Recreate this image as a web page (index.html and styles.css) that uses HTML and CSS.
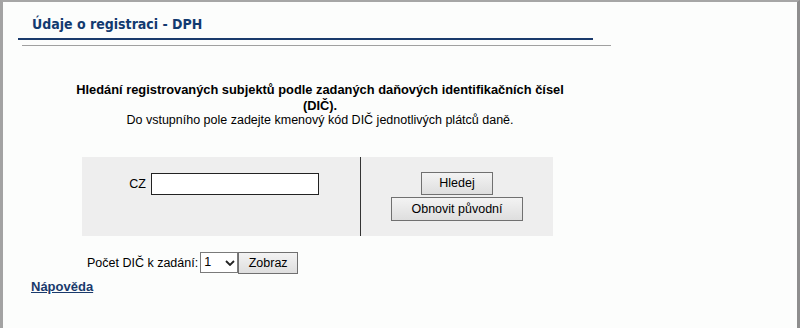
FILE: index.html
```html
<!DOCTYPE html>
<html lang="cs">
<head>
<meta charset="utf-8">
<title>Údaje o registraci - DPH</title>
<link rel="stylesheet" href="styles.css">
</head>
<body>
<div class="frame">
  <div class="header">
    <h1 class="title">Údaje o registraci - DPH</h1>
  </div>
  <div class="rule"></div>

  <div class="intro">
    <h2 class="lead">Hledání registrovaných subjektů podle zadaných daňových identifikačních čísel (DIČ).</h2>
    <p class="hint">Do vstupního pole zadejte kmenový kód DIČ jednotlivých plátců daně.</p>
  </div>

  <div class="panel">
    <div class="panel-left">
      <label class="cz" for="dic">CZ</label>
      <input class="field" id="dic" type="text">
    </div>
    <div class="panel-right">
      <button class="btn btn-search" type="button">Hledej</button>
      <button class="btn btn-reset" type="button">Obnovit původní</button>
    </div>
  </div>

  <div class="count-row">
    <span class="count-label">Počet DIČ k zadání:</span>
    <span class="select-wrap">
      <select class="count-select"><option>1</option></select>
      <svg class="chev" width="10" height="6" viewBox="0 0 10 6"><path d="M1 1 L5 5 L9 1" fill="none" stroke="#222" stroke-width="1.8"/></svg>
    </span>
    <button class="btn btn-show" type="button">Zobraz</button>
  </div>

  <a class="help" href="#">Nápověda</a>
</div>
</body>
</html>
```

FILE: styles.css
```css
html, body {
  margin: 0;
  padding: 0;
}
body {
  background: #fcfdfc;
  font-family: "Liberation Sans", Arial, sans-serif;
  font-size: 12.5px;
  color: #000;
}
.frame {
  box-sizing: border-box;
  height: 328px;
  border-top: 2px solid #a6a6a6;
  border-left: 3px solid #a3a3a3;
  border-right: 3px solid #8e8e8e;
  overflow: hidden;
}
.header {
  margin-left: 15px;
  width: 575px;
  border-bottom: 2px solid #1a3a6c;
  padding: 14px 0 6px 14px;
  box-sizing: border-box;
}
.title {
  margin: 0;
  font-family: "DejaVu Sans Condensed", "Liberation Sans Narrow", sans-serif;
  font-weight: bold;
  font-size: 14px;
  line-height: 16px;
  color: #123a70;
}
.rule {
  margin-left: 19px;
  width: 589px;
  height: 1px;
  margin-top: 5px;
  background: #a0a0a0;
}
.intro {
  margin: 36px 0 0 62px;
  width: 510px;
  text-align: center;
}
.lead {
  margin: 0;
  font-size: 12.85px;
  font-weight: bold;
  line-height: 15.5px;
}
.hint {
  margin: 0;
  line-height: 15.5px;
}
.panel {
  display: flex;
  margin: 28px 0 0 79px;
  width: 471px;
  height: 79px;
  background: #eeeeee;
}
.panel-left {
  width: 279px;
  display: flex;
  justify-content: center;
  align-items: flex-start;
  gap: 5px;
  padding: 16px 0 0 6px;
  box-sizing: border-box;
  border-right: 1px solid #333;
}
.cz {
  line-height: 21px;
  padding-top: 1px;
}
.field {
  box-sizing: border-box;
  width: 168px;
  height: 22px;
  margin: 0;
  border: 1px solid #222;
  background: #fff;
  padding: 0 3px;
  font: 12.5px "Liberation Sans", Arial, sans-serif;
}
.panel-right {
  flex: 1;
  display: flex;
  flex-direction: column;
  align-items: center;
  justify-content: center;
  gap: 2px;
}
.btn {
  box-sizing: border-box;
  margin: 0;
  border: 1px solid #707070;
  border-radius: 0;
  background: linear-gradient(#f3f3f3, #dedede);
  font: 12.5px "Liberation Sans", Arial, sans-serif;
  color: #000;
  padding: 0;
}
.btn-search {
  width: 72px;
  height: 23px;
}
.btn-reset {
  width: 132px;
  height: 24px;
}
.count-row {
  display: flex;
  align-items: flex-start;
  margin: 16px 0 0 84px;
  height: 22px;
}
.count-label {
  line-height: 20px;
  padding-top: 1px;
  padding-right: 2px;
}
.select-wrap {
  position: relative;
  display: inline-block;
}
.count-select {
  appearance: none;
  -webkit-appearance: none;
  box-sizing: border-box;
  width: 38px;
  height: 21px;
  margin: 0;
  border: 1px solid #7a7a7a;
  border-radius: 0;
  background: #fff;
  padding: 0 0 0 3px;
  font: 12.5px "Liberation Sans", Arial, sans-serif;
  color: #000;
}
.chev {
  position: absolute;
  left: 25px;
  top: 8px;
  pointer-events: none;
}
.btn-show {
  width: 60px;
  height: 22px;
}
.help {
  display: inline-block;
  margin: 5px 0 0 28px;
  font-size: 13px;
  font-weight: bold;
  color: #1a3a6c;
  text-decoration: underline;
  line-height: 15px;
}
```
